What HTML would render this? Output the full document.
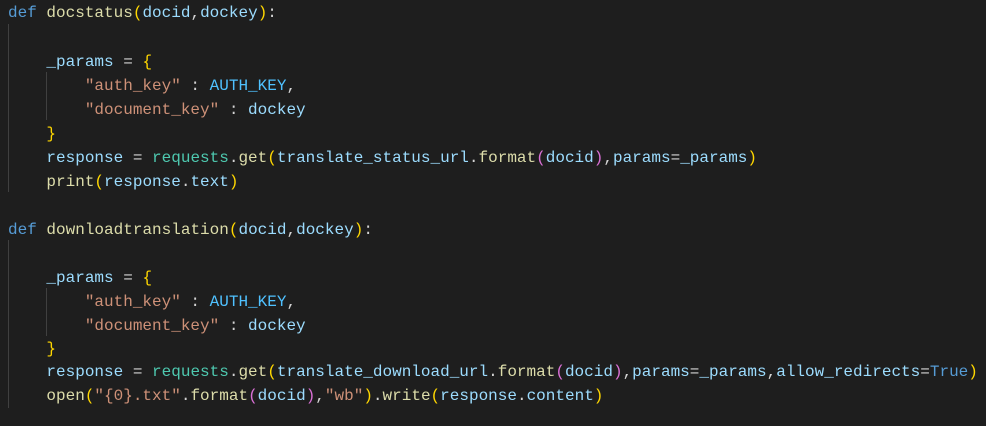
<!DOCTYPE html>
<html><head><style>
body{margin:0;background:#1e1e1e;width:986px;height:426px;overflow:hidden;position:relative}
.l{position:absolute;left:8px;white-space:pre;font-family:"Liberation Mono",monospace;font-size:16px;line-height:24px;height:24px;color:#d4d4d4}
.k{color:#569cd6}.f{color:#dcdcaa}.p{color:#9cdcfe}.s{color:#ce9178}.y{color:#ffd700}.m{color:#da70d6}.c{color:#4fc1ff}.t{color:#4ec9b0}
.g{position:absolute;width:1px;background:#404040}
</style></head><body>
<div class="g" style="left:8px;top:24px;height:168px"></div>
<div class="g" style="left:46px;top:72px;height:48px"></div>
<div class="g" style="left:8px;top:240px;height:168px"></div>
<div class="g" style="left:46px;top:288px;height:48px"></div>
<div class="l" style="top:1px"><span class="k">def</span> <span class="f">docstatus</span><span class="y">(</span><span class="p">docid</span>,<span class="p">dockey</span><span class="y">)</span>:</div>
<div class="l" style="top:50px">    <span class="p">_params</span> = <span class="y">{</span></div>
<div class="l" style="top:74px">        <span class="s">"auth_key"</span> : <span class="c">AUTH_KEY</span>,</div>
<div class="l" style="top:98px">        <span class="s">"document_key"</span> : <span class="p">dockey</span></div>
<div class="l" style="top:122px">    <span class="y">}</span></div>
<div class="l" style="top:146px">    <span class="p">response</span> = <span class="t">requests</span>.<span class="f">get</span><span class="y">(</span><span class="p">translate_status_url</span>.<span class="f">format</span><span class="m">(</span><span class="p">docid</span><span class="m">)</span>,<span class="p">params</span>=<span class="p">_params</span><span class="y">)</span></div>
<div class="l" style="top:170px">    <span class="f">print</span><span class="y">(</span><span class="p">response</span>.<span class="p">text</span><span class="y">)</span></div>
<div class="l" style="top:218px"><span class="k">def</span> <span class="f">downloadtranslation</span><span class="y">(</span><span class="p">docid</span>,<span class="p">dockey</span><span class="y">)</span>:</div>
<div class="l" style="top:266px">    <span class="p">_params</span> = <span class="y">{</span></div>
<div class="l" style="top:290px">        <span class="s">"auth_key"</span> : <span class="c">AUTH_KEY</span>,</div>
<div class="l" style="top:314px">        <span class="s">"document_key"</span> : <span class="p">dockey</span></div>
<div class="l" style="top:337px">    <span class="y">}</span></div>
<div class="l" style="top:360px">    <span class="p">response</span> = <span class="t">requests</span>.<span class="f">get</span><span class="y">(</span><span class="p">translate_download_url</span>.<span class="f">format</span><span class="m">(</span><span class="p">docid</span><span class="m">)</span>,<span class="p">params</span>=<span class="p">_params</span>,<span class="p">allow_redirects</span>=<span class="k">True</span><span class="y">)</span></div>
<div class="l" style="top:384px">    <span class="f">open</span><span class="y">(</span><span class="s">"{0}.txt"</span>.<span class="f">format</span><span class="m">(</span><span class="p">docid</span><span class="m">)</span>,<span class="s">"wb"</span><span class="y">)</span>.<span class="f">write</span><span class="y">(</span><span class="p">response</span>.<span class="p">content</span><span class="y">)</span></div>
</body></html>
